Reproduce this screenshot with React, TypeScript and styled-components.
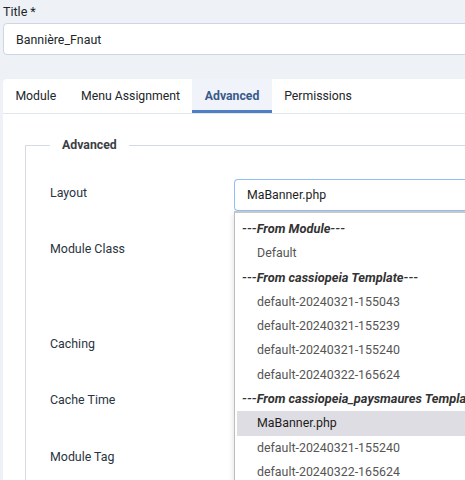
import React from "react";
import styled, { createGlobalStyle } from "styled-components";

const GlobalStyle = createGlobalStyle`
  html, body { margin: 0; padding: 0; }
  body {
    background: #eef1f6;
    font-family: Roboto, "Liberation Sans", sans-serif;
    overflow: hidden;
    width: 465px;
    height: 480px;
  }
`;

const Page = styled.div`
  padding: 4px 0 0 3px;
  width: 560px;
`;

const FieldLabel = styled.div`
  font-size: 12.5px;
  color: #22262a;
  line-height: 16px;
`;

const TextInput = styled.div`
  margin-top: 3px;
  height: 32px;
  box-sizing: border-box;
  border: 1px solid #cdd6e2;
  border-radius: 4px;
  background: #fff;
  display: flex;
  align-items: center;
  padding-left: 12px;
  font-size: 12.4px;
  color: #22262a;
`;

const Card = styled.div`
  margin-top: 24px;
  background: #fff;
  border-radius: 4px 0 0 0;
`;

const TabList = styled.div`
  display: flex;
  height: 34px;
  border-bottom: 1px solid #e2e7ee;
`;

const Tab = styled.div<{ $active?: boolean }>`
  display: flex;
  align-items: center;
  padding: 2px 12.4px 0;
  font-size: 12.25px;
  box-sizing: border-box;
  color: ${(p) => (p.$active ? "#3a5a8a" : "#22262a")};
  font-weight: ${(p) => (p.$active ? 700 : 400)};
  background: ${(p) => (p.$active ? "#f0f4fa" : "transparent")};
  border-bottom: 3px solid ${(p) => (p.$active ? "#4f7ec3" : "transparent")};
`;

const Panel = styled.div`
  padding: 24px 0 0 22px;
  height: 380px;
`;

const Fieldset = styled.fieldset`
  margin: 0;
  padding: 0;
  border: none;
  border-top: 1px solid #d3dae3;
  border-left: 1px solid #d3dae3;
`;

const Legend = styled.legend`
  margin-left: 24px;
  padding: 0 12px;
  font-size: 12.3px;
  font-weight: 700;
  color: #3b3f45;
`;

const Rows = styled.div`
  display: grid;
  grid-template-columns: 208px 1fr;
  padding-top: 33px;
`;

const RowLabel = styled.div<{ $h: number }>`
  height: ${(p) => p.$h}px;
  padding-left: 24px;
  font-size: 12.4px;
  color: #2b3442;
  line-height: 16px;
`;

const RowField = styled.div<{ $h: number }>`
  height: ${(p) => p.$h}px;
  position: relative;
`;

const Select = styled.div`
  height: 32px;
  box-sizing: border-box;
  border: 1px solid #93bff5;
  border-right: none;
  border-radius: 4px 0 0 4px;
  display: flex;
  align-items: center;
  padding-left: 12px;
  font-size: 12.3px;
  color: #1e1e1e;
  background: #fff;
  margin-top: -6px;
`;

const Dropdown = styled.div`
  position: absolute;
  left: 0;
  top: 26px;
  width: 300px;
  background: #fff;
  border-left: 1px solid #bdbdbd;
  border-top: 2px solid #c8c8c8;
  box-shadow: 0 3px 6px rgba(0, 0, 0, 0.15);
  padding: 4px 0 0 2px;
  font-size: 12.3px;
  z-index: 2;
`;

const Option = styled.div<{ $group?: boolean; $selected?: boolean }>`
  height: 24.3px;
  line-height: 24.3px;
  white-space: nowrap;
  padding-left: ${(p) => (p.$group ? "5px" : "20px")};
  font-size: ${(p) => (p.$group ? "12.8px" : "12.4px")};
  font-weight: ${(p) => (p.$group ? 700 : 400)};
  font-style: ${(p) => (p.$group ? "italic" : "normal")};
  color: ${(p) => (p.$group ? "#333" : p.$selected ? "#1e1e1e" : "#555")};
  background: ${(p) => (p.$selected ? "#dedde3" : "transparent")};
`;

const options: { t: string; g?: boolean; s?: boolean }[] = [
  { t: "---From Module---", g: true },
  { t: "Default" },
  { t: "---From cassiopeia Template---", g: true },
  { t: "default-20240321-155043" },
  { t: "default-20240321-155239" },
  { t: "default-20240321-155240" },
  { t: "default-20240322-165624" },
  { t: "---From cassiopeia_paysmaures Template---", g: true },
  { t: "MaBanner.php", s: true },
  { t: "default-20240321-155240" },
  { t: "default-20240322-165624" },
];

const rows = [
  { label: "Layout", h: 56 },
  { label: "Module Class", h: 95 },
  { label: "Caching", h: 56 },
  { label: "Cache Time", h: 57 },
  { label: "Module Tag", h: 57 },
];

export default function App() {
  return (
    <>
      <GlobalStyle />
      <Page>
        <FieldLabel>Title *</FieldLabel>
        <TextInput>Bannière_Fnaut</TextInput>
        <Card>
          <TabList>
            <Tab>Module</Tab>
            <Tab>Menu Assignment</Tab>
            <Tab $active>Advanced</Tab>
            <Tab>Permissions</Tab>
          </TabList>
          <Panel>
            <Fieldset>
              <Legend>Advanced</Legend>
              <Rows>
                {rows.map((r, i) => (
                  <React.Fragment key={r.label}>
                    <RowLabel $h={r.h}>{r.label}</RowLabel>
                    <RowField $h={r.h}>
                      {i === 0 && (
                        <>
                          <Select>MaBanner.php</Select>
                          <Dropdown>
                            {options.map((o, j) => (
                              <Option key={j} $group={o.g} $selected={o.s}>
                                {o.t}
                              </Option>
                            ))}
                          </Dropdown>
                        </>
                      )}
                    </RowField>
                  </React.Fragment>
                ))}
              </Rows>
            </Fieldset>
          </Panel>
        </Card>
      </Page>
    </>
  );
}
